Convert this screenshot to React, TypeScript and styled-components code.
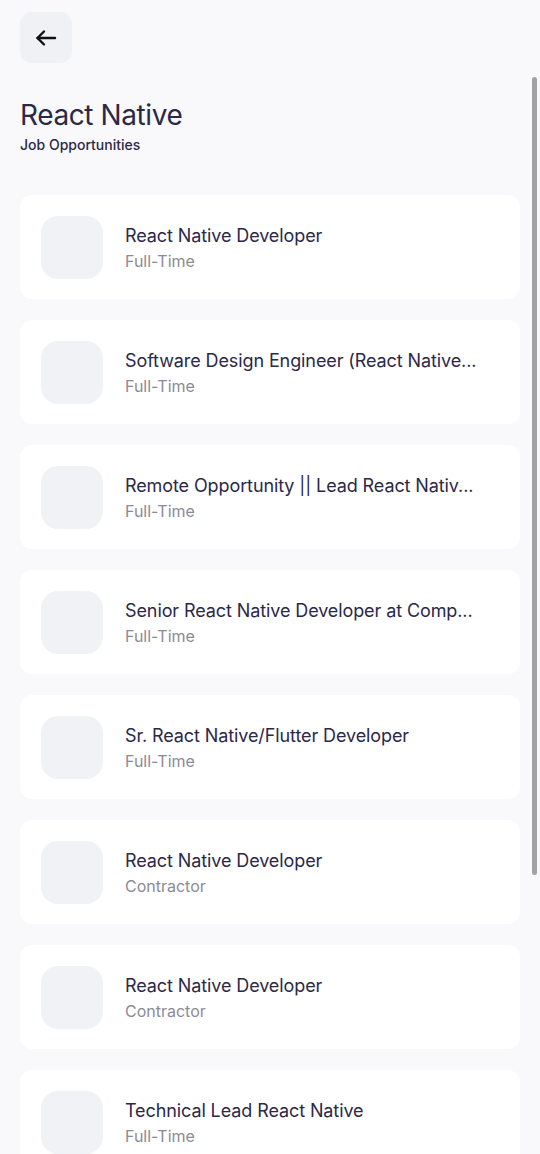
import React from "react";
import styled, { createGlobalStyle } from "styled-components";

const Global = createGlobalStyle`
  html, body { margin: 0; padding: 0; background: #f9f9fb; }
  body { font-family: Inter, "Noto Sans", sans-serif; -webkit-font-smoothing: antialiased; }
  * { box-sizing: border-box; }
`;

const Page = styled.div`
  position: relative;
  min-height: 1154px;
  padding: 12px 20px 0 20px;
  display: flex;
  flex-direction: column;
`;

const BackButton = styled.button`
  width: 52px;
  height: 51px;
  border: none;
  border-radius: 12px;
  background: #f0f1f5;
  display: flex;
  align-items: center;
  justify-content: center;
  padding: 0;
  cursor: pointer;
`;

const Header = styled.div`
  margin-top: 35px;
  display: flex;
  flex-direction: column;
  gap: 5px;
`;

const Title = styled.h1`
  margin: 0;
  font-size: 28px;
  line-height: 34px;
  font-weight: 400;
  color: #2b2948;
  letter-spacing: -0.4px;
`;

const Subtitle = styled.div`
  font-size: 14px;
  line-height: 16px;
  font-weight: 500;
  color: #2b2948;
`;

const List = styled.div`
  margin-top: 42px;
  display: flex;
  flex-direction: column;
  gap: 21px;
`;

const Card = styled.div`
  background: #ffffff;
  border-radius: 12px;
  height: 104px;
  padding: 0 20px 0 21px;
  display: flex;
  align-items: center;
  gap: 22px;
`;

const Logo = styled.div`
  flex: none;
  width: 62px;
  height: 63px;
  border-radius: 17px;
  background: #f1f2f6;
`;

const Info = styled.div`
  min-width: 0;
  flex: 1;
  display: flex;
  flex-direction: column;
  gap: 5px;
  margin-top: 1px;
`;

const JobTitle = styled.div`
  font-size: 18px;
  line-height: 22px;
  color: #2b2948;
  white-space: nowrap;
  overflow: hidden;
  text-overflow: ellipsis;
  letter-spacing: -0.1px;
`;

const JobType = styled.div`
  font-size: 16px;
  line-height: 18px;
  color: #8b8b96;
`;

const Scrollbar = styled.div`
  position: absolute;
  right: 3px;
  top: 77px;
  width: 5px;
  height: 798px;
  border-radius: 3px;
  background: #a3a3a3;
`;

const jobs = [
  { title: "React Native Developer", type: "Full-Time" },
  { title: "Software Design Engineer (React Native...", type: "Full-Time" },
  { title: "Remote Opportunity || Lead React Nativ...", type: "Full-Time" },
  { title: "Senior React Native Developer at Comp...", type: "Full-Time" },
  { title: "Sr. React Native/Flutter Developer", type: "Full-Time" },
  { title: "React Native Developer", type: "Contractor" },
  { title: "React Native Developer", type: "Contractor" },
  { title: "Technical Lead React Native", type: "Full-Time" },
];

export default function App() {
  return (
    <>
      <Global />
      <Page>
        <BackButton aria-label="Back">
          <svg width="24" height="24" viewBox="0 0 24 24" fill="none" stroke="#111" strokeWidth="2.4" strokeLinecap="round" strokeLinejoin="round">
            <path d="M21 12H3.5" />
            <path d="M10 5.5L3.5 12L10 18.5" />
          </svg>
        </BackButton>
        <Header>
          <Title>React Native</Title>
          <Subtitle>Job Opportunities</Subtitle>
        </Header>
        <List>
          {jobs.map((j, i) => (
            <Card key={i}>
              <Logo />
              <Info>
                <JobTitle>{j.title}</JobTitle>
                <JobType>{j.type}</JobType>
              </Info>
            </Card>
          ))}
        </List>
        <Scrollbar />
      </Page>
    </>
  );
}
